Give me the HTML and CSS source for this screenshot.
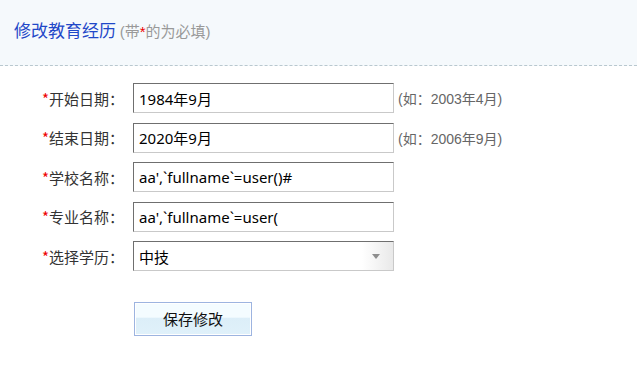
FILE: index.html
```html
<!DOCTYPE html>
<html lang="zh-CN">
<head>
    <meta charset="UTF-8">
    <title>修改教育经历</title>
    <link rel="stylesheet" href="styles.css">
</head>
<body>
    <div class="header">
        <span class="title">修改教育经历</span>
        <span class="sub">(带<em>*</em>的为必填)</span>
    </div>

    <form class="edu-form">
        <div class="row">
            <label><em>*</em>开始日期：</label>
            <input type="text" class="field" value="1984年9月">
            <span class="hint">(如：2003年4月)</span>
        </div>
        <div class="row">
            <label><em>*</em>结束日期：</label>
            <input type="text" class="field" value="2020年9月">
            <span class="hint">(如：2006年9月)</span>
        </div>
        <div class="row">
            <label><em>*</em>学校名称：</label>
            <input type="text" class="field" value="aa',`fullname`=user()#">
        </div>
        <div class="row">
            <label><em>*</em>专业名称：</label>
            <input type="text" class="field" value="aa',`fullname`=user(">
        </div>
        <div class="row">
            <label><em>*</em>选择学历：</label>
            <div class="field select">
                <span>中技</span>
                <span class="arrow"></span>
            </div>
        </div>
        <div class="actions">
            <button type="button" class="save">保存修改</button>
        </div>
    </form>
</body>
</html>
```

FILE: styles.css
```css
* {
    margin: 0;
    padding: 0;
    box-sizing: border-box;
}

body {
    font-family: "Noto Sans", "Noto Sans CJK SC", sans-serif;
    font-size: 14px;
    color: #333;
    background: #fff;
}

em {
    font-style: normal;
    color: #e00;
}

.header {
    height: 66px;
    background-color: #f5f9fc;
    border-bottom: 1px dashed #b9c8cf;
    padding: 17px 0 0 14px;
    white-space: nowrap;
}

.title {
    font-size: 17px;
    color: #1f48c8;
    font-family: "Noto Sans CJK SC", sans-serif;
}

.sub {
    font-size: 15px;
    color: #999;
    font-family: "Liberation Sans", "Noto Sans CJK SC", sans-serif;
}

.edu-form {
    padding-top: 17px;
}

.row {
    display: flex;
    align-items: center;
    height: 30px;
    margin-bottom: 9.5px;
}

.row label {
    width: 133px;
    padding-right: 9px;
    text-align: right;
    font-family: "Noto Sans CJK JP", "Noto Sans CJK SC", sans-serif;
    font-size: 15px;
    color: #333;
}

.field {
    width: 261px;
    height: 30px;
    border: 1px solid;
    border-color: #6f6f6f #c9c9c9 #c9c9c9 #6f6f6f;
    padding: 0 5px;
    font-family: "Noto Sans", "Noto Sans CJK SC", sans-serif;
    font-size: 15px;
    color: #000;
    background: #fff;
    outline: none;
}

.hint {
    margin-left: 4px;
    font-family: "Liberation Sans", "Noto Sans CJK JP", sans-serif;
    font-size: 14px;
    color: #666;
}

.select {
    display: flex;
    align-items: center;
    justify-content: space-between;
    background: linear-gradient(to right, #fff 88%, #e9e9e9 100%);
    font-family: "Noto Sans CJK SC", sans-serif;
    padding-right: 13px;
}

.arrow {
    width: 0;
    height: 0;
    border-left: 4px solid transparent;
    border-right: 4px solid transparent;
    border-top: 5px solid #8e8e8e;
}

.actions {
    padding: 21px 0 0 134px;
}

.save {
    width: 118px;
    height: 34px;
    border: 1px solid #9db4e0;
    background: linear-gradient(to bottom, #f4fcff 0%, #f4fcff 45%, #dceef8 46%, #e0f1fa 100%);
    box-shadow: inset 0 0 0 1px #fff;
    font-family: "Noto Sans CJK SC", sans-serif;
    font-size: 15px;
    color: #111;
    cursor: pointer;
}
```
